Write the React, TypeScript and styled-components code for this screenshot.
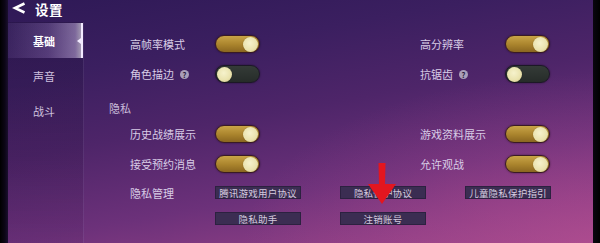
import React from 'react';
import styled, { createGlobalStyle } from 'styled-components';

const Global = createGlobalStyle`
  html, body { margin: 0; padding: 0; background: #000; }
  body {
    width: 600px; height: 243px; overflow: hidden;
    font-family: "Noto Sans CJK SC", "Noto Sans", sans-serif;
  }
`;

const Screen = styled.div`
  width: 600px;
  height: 243px;
  display: flex;
  background: #000;
`;

const LeftEdge = styled.div`
  width: 8px;
  background: linear-gradient(90deg, #000 0%, #0c0616 60%, #1a0f2e 100%);
`;

const RightEdge = styled.div`
  width: 7px;
  background: linear-gradient(90deg, #0a0610, #000);
`;

const Panel = styled.div`
  position: relative;
  flex: 1;
  display: flex;
  flex-direction: column;
  background:
    radial-gradient(ellipse 60% 70% at 100% 100%, rgba(190, 80, 150, 0.45), rgba(190, 80, 150, 0) 100%),
    linear-gradient(170deg, #2e1956 0%, #3b1f60 24%, #4e2569 46%, #6c317a 70%, #8c3e84 88%, #9e4889 100%);
  overflow: hidden;
`;

const Header = styled.div`
  height: 22px;
  display: flex;
  align-items: flex-start;
  gap: 9px;
  padding: 2px 0 0 4px;
  box-sizing: border-box;
`;

const Title = styled.span`
  color: #fff;
  font-size: 13.5px;
  font-weight: 700;
  line-height: 15px;
  letter-spacing: 0.5px;
`;

const Body = styled.div`
  flex: 1;
  display: flex;
`;

const Sidebar = styled.div`
  width: 75px;
  display: flex;
  flex-direction: column;
  padding-top: 1px;
  background: linear-gradient(180deg, rgba(20, 10, 40, 0.22), rgba(30, 10, 50, 0.16) 60%, rgba(40, 10, 60, 0.08));
  border-right: 1px solid rgba(190, 160, 230, 0.14);
`;

const NavItem = styled.div<{ $active?: boolean }>`
  position: relative;
  height: 35px;
  display: flex;
  align-items: center;
  padding-left: 25px;
  font-size: 11px;
  font-weight: ${p => (p.$active ? 700 : 400)};
  color: ${p => (p.$active ? '#ffffff' : '#cfc2df')};
  background: ${p =>
    p.$active
      ? 'linear-gradient(90deg, rgba(150,120,200,0.12) 0%, rgba(170,140,210,0.30) 55%, rgba(220,200,245,0.45) 92%, rgba(255,255,255,0.55) 100%)'
      : 'transparent'};
  border-right: ${p => (p.$active ? '2px solid #f2eaff' : '2px solid transparent')};
`;

const Notch = styled.span`
  position: absolute;
  right: 0;
  top: 50%;
  margin-top: -3px;
  width: 0;
  height: 0;
  border-top: 3px solid transparent;
  border-bottom: 3px solid transparent;
  border-right: 4px solid #f2eaff;
`;

const Main = styled.div`
  flex: 1;
  display: flex;
  flex-direction: column;
  padding-top: 7px;
`;

const Grid = styled.div<{ $mt?: number }>`
  display: grid;
  grid-template-columns: 85px 205px 85px 45px;
  grid-auto-rows: 30px;
  align-items: center;
  padding-left: 46px;
  margin-top: ${p => p.$mt ?? 0}px;
`;

const Label = styled.span`
  display: inline-flex;
  align-items: center;
  gap: 6px;
  font-size: 11px;
  color: #d8cce6;
  white-space: nowrap;
`;

const Help = styled.span`
  width: 9px;
  height: 9px;
  border-radius: 50%;
  background: #a99fba;
  color: #2a1c3c;
  font-size: 7.5px;
  font-weight: 700;
  line-height: 9px;
  text-align: center;
`;

const SectionTitle = styled.div`
  margin-top: 11px;
  padding-left: 25px;
  height: 16px;
  line-height: 16px;
  font-size: 11px;
  color: #cbbedb;
`;

const Track = styled.div<{ $on?: boolean }>`
  width: 45px;
  height: 18px;
  box-sizing: border-box;
  border-radius: 9px;
  padding: 0 1px;
  display: flex;
  align-items: center;
  justify-content: ${p => (p.$on ? 'flex-end' : 'flex-start')};
  border: 1.5px solid ${p => (p.$on ? '#3a1a24' : '#1c1826')};
  background: ${p =>
    p.$on
      ? 'linear-gradient(180deg, #c9a447 0%, #a9832c 55%, #8a6620 100%)'
      : 'linear-gradient(180deg, #343b37 0%, #262c29 100%)'};
  box-shadow: 0 0 2px rgba(0, 0, 0, 0.5);
`;

const Knob = styled.div`
  width: 15px;
  height: 15px;
  border-radius: 50%;
  background: radial-gradient(circle at 45% 40%, #f6f2cc 0%, #e9e2ac 60%, #c9bd7e 100%);
  box-shadow: 0 0 1px rgba(0, 0, 0, 0.4);
`;

const Toggle = ({ on }: { on?: boolean }) => (
  <Track $on={on}>
    <Knob />
  </Track>
);

const ButtonGrid = styled.div`
  display: grid;
  grid-template-columns: 85px 125px 125px 85px;
  grid-auto-rows: 13px;
  row-gap: 13px;
  align-items: center;
  padding-left: 46px;
  margin-top: 7px;
`;

const LinkButton = styled.div`
  width: 86px;
  height: 13px;
  box-sizing: border-box;
  display: flex;
  align-items: center;
  justify-content: center;
  background: #3b2d52;
  border: 1px solid #2c2140;
  font-size: 9.5px;
  color: #d4cadf;
  white-space: nowrap;
  letter-spacing: 0.2px;
`;

const Arrow = styled.svg`
  position: absolute;
  left: 359px;
  top: 163px;
`;

export default function App() {
  return (
    <>
      <Global />
      <Screen>
        <LeftEdge />
        <Panel>
          <Header>
            <svg width="14" height="12" viewBox="0 0 14 12">
              <path d="M12.5 1.5 L3 6 L12.5 10.5" fill="none" stroke="#fff" strokeWidth="2.6" strokeLinejoin="miter" />
            </svg>
            <Title>设置</Title>
          </Header>
          <Body>
            <Sidebar>
              <NavItem $active>
                基础
                <Notch />
              </NavItem>
              <NavItem>声音</NavItem>
              <NavItem>战斗</NavItem>
            </Sidebar>
            <Main>
              <Grid>
                <Label>高帧率模式</Label>
                <Toggle on />
                <Label>高分辨率</Label>
                <Toggle on />
                <Label>
                  角色描边<Help>?</Help>
                </Label>
                <Toggle />
                <Label>
                  抗锯齿<Help>?</Help>
                </Label>
                <Toggle />
              </Grid>
              <SectionTitle>隐私</SectionTitle>
              <Grid $mt={3}>
                <Label>历史战绩展示</Label>
                <Toggle on />
                <Label>游戏资料展示</Label>
                <Toggle on />
                <Label>接受预约消息</Label>
                <Toggle on />
                <Label>允许观战</Label>
                <Toggle on />
              </Grid>
              <ButtonGrid>
                <Label>隐私管理</Label>
                <LinkButton>腾讯游戏用户协议</LinkButton>
                <LinkButton>隐私保护协议</LinkButton>
                <LinkButton>儿童隐私保护指引</LinkButton>
                <span />
                <LinkButton>隐私助手</LinkButton>
                <LinkButton>注销账号</LinkButton>
              </ButtonGrid>
            </Main>
          </Body>
          <Arrow width="30" height="42" viewBox="0 0 30 42">
            <path d="M11.5 0 H18.5 L18 21 H29 L15 41 L1 21 H12 Z" fill="#e3161f" />
          </Arrow>
        </Panel>
        <RightEdge />
      </Screen>
    </>
  );
}
